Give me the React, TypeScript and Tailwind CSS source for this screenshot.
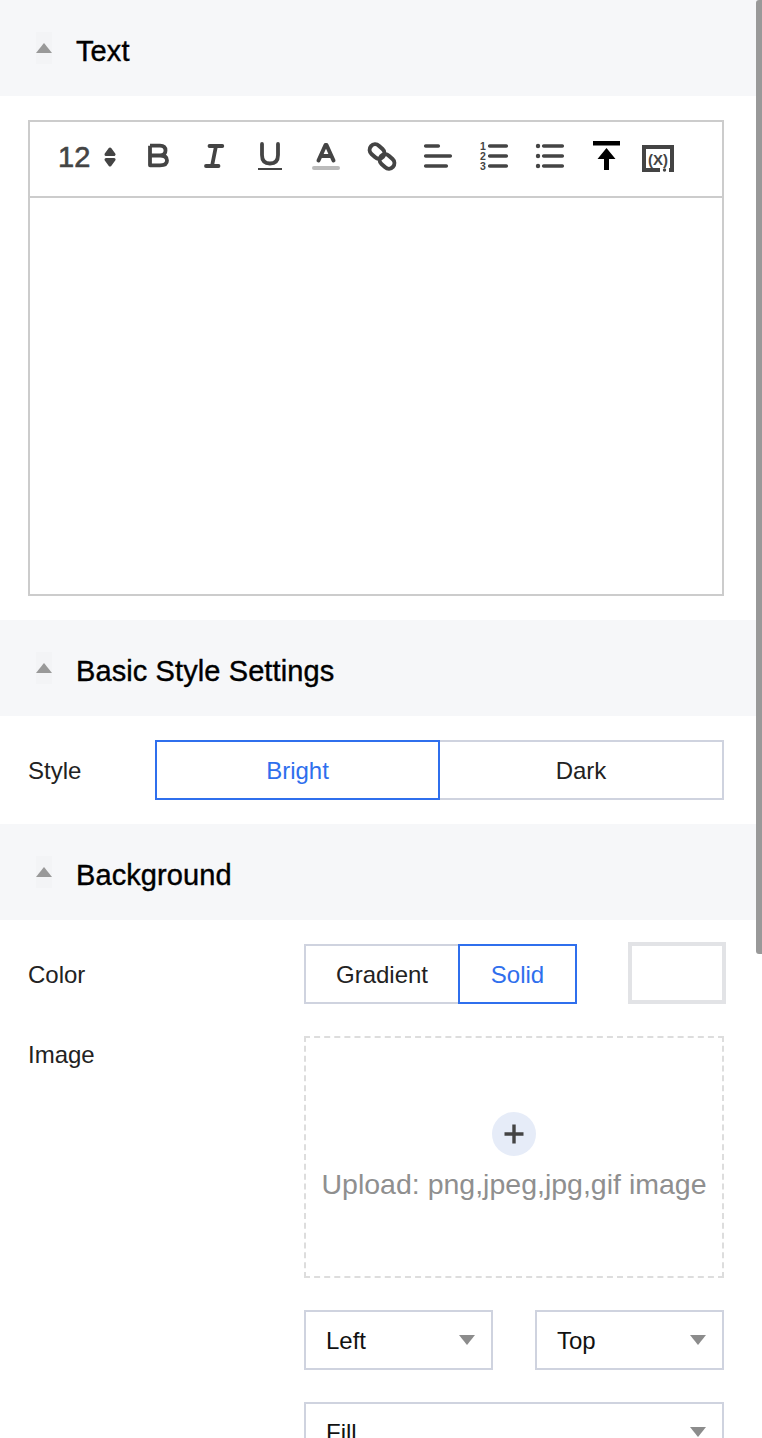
import React from 'react'

const ink = '#444444'

function SectionHeader({ title }: { title: string }) {
  return (
    <div className="flex h-24 items-center bg-[#f6f7f9] pl-9">
      <span className="flex h-8 w-4 items-center bg-[#f3f4f6]">
        <svg width="16" height="32" viewBox="0 0 16 32">
          <path d="M8 11 L16 21 L0 21 Z" fill="#999999" />
        </svg>
      </span>
      <span className="ml-6 pt-[6px] text-[29px] leading-none tracking-[0.1px] text-black [-webkit-text-stroke:0.4px_#000000]">{title}</span>
    </div>
  )
}

function Tool({ x, children }: { x: number; children: React.ReactNode }) {
  return (
    <svg width="56" height="44" viewBox={`${x} 137 56 44`} className="shrink-0">
      {children}
    </svg>
  )
}

function Toolbar() {
  return (
    <div className="flex h-[76px] items-center border-b-2 border-[#cccccc] pl-[28px]">
      <div className="flex w-[72px] shrink-0 items-center pb-1">
        <span className="w-[46px] text-[29px] leading-none text-[#444444] [-webkit-text-stroke:0.6px_#444444]">12</span>
        <svg width="12" height="20" viewBox="0 0 12 20">
          <path d="M6 2 L10 7.5 H2 Z M6 18 L10 12.5 H2 Z" fill={ink} stroke={ink} strokeWidth="3" strokeLinejoin="round" />
        </svg>
      </div>
      <Tool x={130}>
        <path
          d="M150 145.7 H160 Q165.5 145.7 165.5 150.6 Q165.5 155.5 160 155.5 H150 M150 155.5 H160 Q167 155.5 167 160.5 Q167 165.3 160 165.3 H150 V145.7"
          fill="none"
          stroke={ink}
          strokeWidth="3.8"
          strokeLinejoin="round"
        />
      </Tool>
      <Tool x={186}>
        <path d="M209.5 146 H222.3 M206 166 H218.5 M216 146 L212 166" fill="none" stroke={ink} strokeWidth="3.8" strokeLinecap="round" />
      </Tool>
      <Tool x={242}>
        <path d="M262 144 V155 Q262 163.5 270 163.5 Q278 163.5 278 155 V144" fill="none" stroke={ink} strokeWidth="3.8" strokeLinecap="round" />
        <path d="M258 169 H282" stroke={ink} strokeWidth="2" />
      </Tool>
      <Tool x={298}>
        <path d="M318.5 160.5 L325.5 145 H326.5 L333.5 160.5 M320.5 156 H331.5" fill="none" stroke={ink} strokeWidth="4" strokeLinecap="round" strokeLinejoin="round" />
        <path d="M314 168 H338" stroke="#bbbbbb" strokeWidth="4" strokeLinecap="round" />
      </Tool>
      <Tool x={354}>
        <g fill="none" stroke={ink} strokeWidth="4">
          <rect x="369" y="146" width="16" height="11" rx="5.5" transform="rotate(42 377 151.5)" />
          <rect x="379" y="156" width="16" height="11" rx="5.5" transform="rotate(42 387 161.5)" />
        </g>
      </Tool>
      <Tool x={410}>
        <path d="M425.7 146 H438.3 M425.7 156 H450.3 M425.7 166 H446.3" stroke={ink} strokeWidth="3.6" strokeLinecap="round" />
      </Tool>
      <Tool x={466}>
        <path d="M489.7 146 H506.3 M489.7 156 H506.3 M489.7 166 H506.3" stroke={ink} strokeWidth="3.6" strokeLinecap="round" />
        <g fill={ink} fontSize="10.5" fontWeight="700" fontFamily="Liberation Sans" textAnchor="middle">
          <text x="483" y="150">1</text>
          <text x="483" y="160">2</text>
          <text x="483" y="170">3</text>
        </g>
      </Tool>
      <Tool x={522}>
        <path d="M543.7 146 H562.3 M543.7 156 H562.3 M543.7 166 H562.3" stroke={ink} strokeWidth="3.6" strokeLinecap="round" />
        <circle cx="538" cy="146" r="2.2" fill={ink} />
        <circle cx="538" cy="156" r="2.2" fill={ink} />
        <circle cx="538" cy="166" r="2.2" fill={ink} />
      </Tool>
      <Tool x={578}>
        <path d="M593 141 H620 V145.5 H593 Z M606.5 148 L615.5 159 H609 V170 H604 V159 H597.5 Z" fill="#000000" />
      </Tool>
      <Tool x={634}>
        <path d="M660 170 H644 V147 H672 V170 H669" fill="none" stroke={ink} strokeWidth="4" />
        <circle cx="664.5" cy="170" r="1.7" fill={ink} />
        <text x="658" y="164.5" textAnchor="middle" fontSize="15" fontWeight="700" fontFamily="Liberation Sans" fill={ink}>
          (X)
        </text>
      </Tool>
    </div>
  )
}

function Segment({ label, active, className }: { label: string; active?: boolean; className: string }) {
  return (
    <div
      className={`flex h-[60px] items-center justify-center border-2 bg-white pt-0.5 ${className} ${
        active ? 'z-10 border-[#2f6fed] text-[#2f6fed]' : 'border-[#cfd3df] text-[#222222]'
      }`}
    >
      {label}
    </div>
  )
}

function SelectBox({ label, className }: { label: string; className: string }) {
  return (
    <div className={`flex h-[60px] items-center justify-between border-2 border-[#cfd3df] pr-4 pl-5 text-[#111111] ${className}`}>
      <span className="pt-0.5">{label}</span>
      <svg width="16" height="10" viewBox="0 0 16 10">
        <path d="M0 0 H16 L8 10 Z" fill="#8c8c8c" />
      </svg>
    </div>
  )
}

export default function App() {
  return (
    <div className="relative h-[1438px] w-[762px] overflow-hidden bg-white font-['Liberation_Sans',Arial,sans-serif] text-2xl">
      <SectionHeader title="Text" />
      <div className="py-6 pr-[38px] pl-7">
        <div className="h-[476px] border-2 border-[#cccccc]">
          <Toolbar />
        </div>
      </div>

      <SectionHeader title="Basic Style Settings" />
      <div className="flex items-center px-7 py-6">
        <span className="w-[127px] pt-0.5 text-[#222222]">Style</span>
        <Segment label="Bright" active className="w-[285px]" />
        <Segment label="Dark" className="-ml-0.5 w-[286px]" />
      </div>

      <SectionHeader title="Background" />
      <div className="px-7 pt-6">
        <div className="flex items-center">
          <span className="w-[276px] pt-0.5 text-[#222222]">Color</span>
          <Segment label="Gradient" className="w-[156px]" />
          <Segment label="Solid" active className="-ml-0.5 w-[119px]" />
          <div className="-mt-0.5 ml-[51px] h-[62px] w-[98px] border-4 border-[#e2e3e6]" />
        </div>
        <div className="mt-8 flex items-start">
          <span className="w-[276px] pt-1 leading-[30px] text-[#222222]">Image</span>
          <div className="flex w-[420px] flex-col">
            <div className="flex h-[242px] flex-col items-center border-2 border-dashed border-[#dddddd] pt-[74px]">
              <div className="flex h-11 w-11 items-center justify-center rounded-full bg-[#e6ecf8]">
                <svg width="20" height="20" viewBox="0 0 20 20">
                  <path d="M10 0.5 V19.5 M0.5 10 H19.5" stroke={ink} strokeWidth="3.4" />
                </svg>
              </div>
              <div className="mt-3 text-[28.5px] leading-8 whitespace-nowrap text-[#8f8f8f]">Upload: png,jpeg,jpg,gif image</div>
            </div>
            <div className="mt-8 flex justify-between">
              <SelectBox label="Left" className="w-[189px]" />
              <SelectBox label="Top" className="w-[189px]" />
            </div>
            <SelectBox label="Fill" className="mt-8 w-[420px]" />
          </div>
        </div>
      </div>

      <div className="absolute top-0 right-0 h-[954px] w-1.5 rounded-l-[3px] bg-[#999999]" />
    </div>
  )
}
